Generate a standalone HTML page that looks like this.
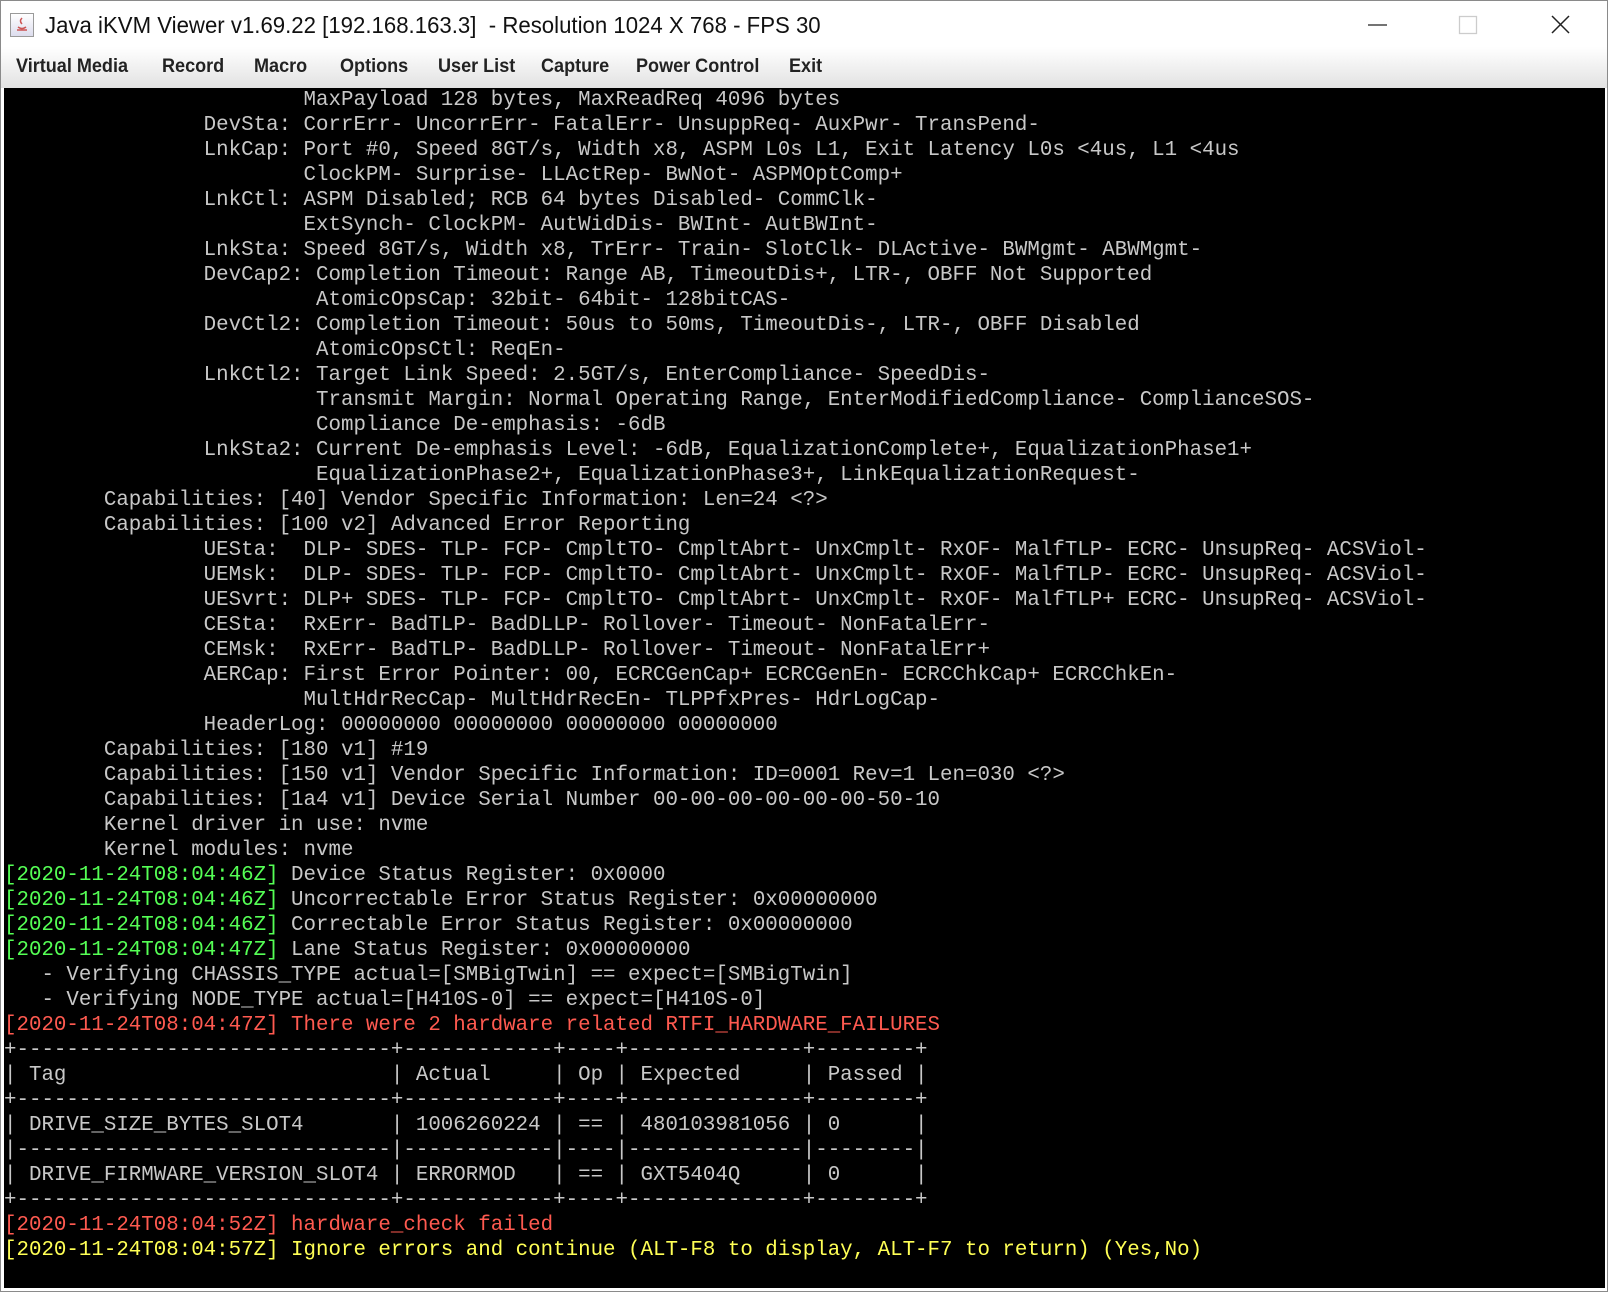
<!DOCTYPE html>
<html><head><meta charset="utf-8"><style>
html,body{margin:0;padding:0;width:1608px;height:1292px;overflow:hidden;background:#fff;font-family:"Liberation Sans",sans-serif}
#win{position:absolute;left:0;top:0;width:1606px;height:1290px;border:1px solid #8a8a8a;background:#fff}
#title{position:absolute;left:0;top:0;width:100%;height:46px;background:#fff}
#title .t{position:absolute;left:44px;top:11px;font-size:23px;color:#111;transform:scaleX(0.965);transform-origin:left;white-space:nowrap}
#icon{position:absolute;left:9px;top:12px;width:24px;height:24px;border:1px solid #9a9a9a;background:linear-gradient(#fff,#dde);box-sizing:border-box}
#menu{position:absolute;left:0;top:46px;width:100%;height:41px;background:linear-gradient(#fff,#e2e2e2)}
#menu span{position:absolute;top:9px;font-size:19px;font-weight:bold;color:#222;transform:scaleX(0.95);transform-origin:left;white-space:nowrap}
#term{position:absolute;left:3px;top:87px;width:1601px;height:1200px;background:#000;overflow:hidden}
pre{margin:0;position:absolute;left:0px;top:0;font-family:"Liberation Mono",monospace;font-size:20.8px;line-height:25px;color:#c8c8c8;letter-spacing:0}
.g{color:#55ff55}.r{color:#ff5a50}.y{color:#ffff55}
</style></head><body>
<div id="win">
<div id="title"><div id="icon"><svg width="22" height="22" viewBox="0 0 22 22"><path d="M6 16h10M7 13q4 3 8 0M11 4q-3 3 0 6" stroke="#c55" stroke-width="1.5" fill="none"/></svg></div>
<div class="t">Java iKVM Viewer v1.69.22 [192.168.163.3]&nbsp; - Resolution 1024 X 768 - FPS 30</div>
<svg style="position:absolute;left:1366px;top:14px" width="22" height="22"><path d="M1 10h19" stroke="#222" stroke-width="1.3"/></svg>
<svg style="position:absolute;left:1457px;top:14px" width="22" height="22"><rect x="1.5" y="1.5" width="17" height="17" fill="none" stroke="#ccc" stroke-width="1.3"/></svg>
<svg style="position:absolute;left:1549px;top:13px" width="22" height="22"><path d="M2 2l17 17M19 2L2 19" stroke="#222" stroke-width="1.5"/></svg>
</div>
<div id="menu">
<span style="left:15px">Virtual Media</span><span style="left:161px">Record</span><span style="left:253px">Macro</span><span style="left:339px">Options</span><span style="left:437px">User List</span><span style="left:540px">Capture</span><span style="left:635px">Power Control</span><span style="left:788px">Exit</span>
</div>
<div id="term"><pre>                        MaxPayload 128 bytes, MaxReadReq 4096 bytes
                DevSta: CorrErr- UncorrErr- FatalErr- UnsuppReq- AuxPwr- TransPend-
                LnkCap: Port #0, Speed 8GT/s, Width x8, ASPM L0s L1, Exit Latency L0s &lt;4us, L1 &lt;4us
                        ClockPM- Surprise- LLActRep- BwNot- ASPMOptComp+
                LnkCtl: ASPM Disabled; RCB 64 bytes Disabled- CommClk-
                        ExtSynch- ClockPM- AutWidDis- BWInt- AutBWInt-
                LnkSta: Speed 8GT/s, Width x8, TrErr- Train- SlotClk- DLActive- BWMgmt- ABWMgmt-
                DevCap2: Completion Timeout: Range AB, TimeoutDis+, LTR-, OBFF Not Supported
                         AtomicOpsCap: 32bit- 64bit- 128bitCAS-
                DevCtl2: Completion Timeout: 50us to 50ms, TimeoutDis-, LTR-, OBFF Disabled
                         AtomicOpsCtl: ReqEn-
                LnkCtl2: Target Link Speed: 2.5GT/s, EnterCompliance- SpeedDis-
                         Transmit Margin: Normal Operating Range, EnterModifiedCompliance- ComplianceSOS-
                         Compliance De-emphasis: -6dB
                LnkSta2: Current De-emphasis Level: -6dB, EqualizationComplete+, EqualizationPhase1+
                         EqualizationPhase2+, EqualizationPhase3+, LinkEqualizationRequest-
        Capabilities: [40] Vendor Specific Information: Len=24 &lt;?&gt;
        Capabilities: [100 v2] Advanced Error Reporting
                UESta:  DLP- SDES- TLP- FCP- CmpltTO- CmpltAbrt- UnxCmplt- RxOF- MalfTLP- ECRC- UnsupReq- ACSViol-
                UEMsk:  DLP- SDES- TLP- FCP- CmpltTO- CmpltAbrt- UnxCmplt- RxOF- MalfTLP- ECRC- UnsupReq- ACSViol-
                UESvrt: DLP+ SDES- TLP- FCP- CmpltTO- CmpltAbrt- UnxCmplt- RxOF- MalfTLP+ ECRC- UnsupReq- ACSViol-
                CESta:  RxErr- BadTLP- BadDLLP- Rollover- Timeout- NonFatalErr-
                CEMsk:  RxErr- BadTLP- BadDLLP- Rollover- Timeout- NonFatalErr+
                AERCap: First Error Pointer: 00, ECRCGenCap+ ECRCGenEn- ECRCChkCap+ ECRCChkEn-
                        MultHdrRecCap- MultHdrRecEn- TLPPfxPres- HdrLogCap-
                HeaderLog: 00000000 00000000 00000000 00000000
        Capabilities: [180 v1] #19
        Capabilities: [150 v1] Vendor Specific Information: ID=0001 Rev=1 Len=030 &lt;?&gt;
        Capabilities: [1a4 v1] Device Serial Number 00-00-00-00-00-00-50-10
        Kernel driver in use: nvme
        Kernel modules: nvme
<span class="g">[2020-11-24T08:04:46Z]</span> Device Status Register: 0x0000
<span class="g">[2020-11-24T08:04:46Z]</span> Uncorrectable Error Status Register: 0x00000000
<span class="g">[2020-11-24T08:04:46Z]</span> Correctable Error Status Register: 0x00000000
<span class="g">[2020-11-24T08:04:47Z]</span> Lane Status Register: 0x00000000
   - Verifying CHASSIS_TYPE actual=[SMBigTwin] == expect=[SMBigTwin]
   - Verifying NODE_TYPE actual=[H410S-0] == expect=[H410S-0]
<span class="r">[2020-11-24T08:04:47Z] There were 2 hardware related RTFI_HARDWARE_FAILURES</span>
+------------------------------+------------+----+--------------+--------+
| Tag                          | Actual     | Op | Expected     | Passed |
+------------------------------+------------+----+--------------+--------+
| DRIVE_SIZE_BYTES_SLOT4       | 1006260224 | == | 480103981056 | 0      |
|------------------------------|------------|----|--------------|--------|
| DRIVE_FIRMWARE_VERSION_SLOT4 | ERRORMOD   | == | GXT5404Q     | 0      |
+------------------------------+------------+----+--------------+--------+
<span class="r">[2020-11-24T08:04:52Z] hardware_check failed</span>
<span class="y">[2020-11-24T08:04:57Z] Ignore errors and continue (ALT-F8 to display, ALT-F7 to return) (Yes,No)</span>
</pre></div>
</div>
</body></html>
